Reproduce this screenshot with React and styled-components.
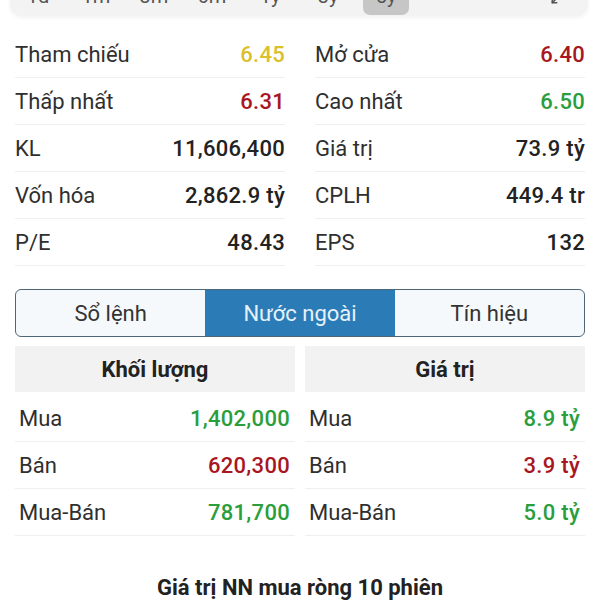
import React from "react";
import styled, { createGlobalStyle } from "styled-components";
import { Maximize2 } from "lucide-react";

const periods = ["1d", "1m", "3m", "6m", "1y", "3y", "5y"];

const stats = [
    { label: "Tham chiếu", value: "6.45", tone: "ref" },
    { label: "Mở cửa", value: "6.40", tone: "down" },
    { label: "Thấp nhất", value: "6.31", tone: "down" },
    { label: "Cao nhất", value: "6.50", tone: "up" },
    { label: "KL", value: "11,606,400" },
    { label: "Giá trị", value: "73.9 tỷ" },
    { label: "Vốn hóa", value: "2,862.9 tỷ" },
    { label: "CPLH", value: "449.4 tr" },
    { label: "P/E", value: "48.43" },
    { label: "EPS", value: "132" },
];

const tabs = ["Sổ lệnh", "Nước ngoài", "Tín hiệu"];

const foreign = [
    {
        title: "Khối lượng",
        rows: [
            { label: "Mua", value: "1,402,000", tone: "up" },
            { label: "Bán", value: "620,300", tone: "down" },
            { label: "Mua-Bán", value: "781,700", tone: "up" },
        ],
    },
    {
        title: "Giá trị",
        rows: [
            { label: "Mua", value: "8.9 tỷ", tone: "up" },
            { label: "Bán", value: "3.9 tỷ", tone: "down" },
            { label: "Mua-Bán", value: "5.0 tỷ", tone: "up" },
        ],
    },
];

const tones = {
    ref: "#dcbf2c",
    down: "#a8161f",
    up: "#2a9e3c",
};

export default function App() {
    return (
        <>
            <GlobalStyle />
            <Page>
                <PeriodBar>
                    {periods.map((p) => (
                        <PeriodItem key={p} $active={p === "5y"}>{p}</PeriodItem>
                    ))}
                    <PeriodIcon>
                        <Maximize2 size={18} strokeWidth={2} />
                    </PeriodIcon>
                </PeriodBar>

                <StatGrid>
                    {stats.map((s) => (
                        <StatRow key={s.label}>
                            <StatLabel>{s.label}</StatLabel>
                            <StatValue $tone={s.tone}>{s.value}</StatValue>
                        </StatRow>
                    ))}
                </StatGrid>

                <TabBar>
                    {tabs.map((t) => (
                        <TabButton key={t} $active={t === "Nước ngoài"}>{t}</TabButton>
                    ))}
                </TabBar>

                <ForeignGrid>
                    {foreign.map((col) => (
                        <ForeignCol key={col.title}>
                            <ForeignHead>{col.title}</ForeignHead>
                            {col.rows.map((r) => (
                                <ForeignRow key={r.label}>
                                    <StatLabel>{r.label}</StatLabel>
                                    <StatValue $tone={r.tone}>{r.value}</StatValue>
                                </ForeignRow>
                            ))}
                        </ForeignCol>
                    ))}
                </ForeignGrid>

                <SectionTitle>Giá trị NN mua ròng 10 phiên</SectionTitle>
            </Page>
        </>
    );
}

//====================================
//        THIS COMPONENT STYLES
//====================================
const GlobalStyle = createGlobalStyle`
    body {
        margin: 0;
        background: #ffffff;
        font-family: Roboto, "Noto Sans", sans-serif;
        color: #2a2a2a;
        overflow: hidden;
    }
`;
const Page = styled('div')`
    width: 600px;
    height: 600px;
    overflow: hidden;
`;
const PeriodBar = styled('div')`
    display: flex;
    align-items: center;
    height: 40px;
    margin: -24px 12px 0 10px;
    background: #f3f3f3;
    border-radius: 0 0 12px 12px;
    box-shadow: 0 2px 4px rgba(0, 0, 0, 0.05);
`;
const PeriodItem = styled('div')`
    width: 46px;
    height: 38px;
    margin: 0 6px;
    display: flex;
    align-items: center;
    justify-content: center;
    font-size: 20px;
    color: #555;
    border-radius: 7px;
    background: ${(props) => props.$active ? "#c6c6c6" : "transparent"};
    &:first-child { margin-left: 5px; }
`;
const PeriodIcon = styled('div')`
    margin-left: auto;
    margin-right: 20px;
    display: flex;
    color: #555;
`;
const StatGrid = styled('div')`
    display: grid;
    grid-template-columns: 1fr 1fr;
    column-gap: 30px;
    margin: 15px 15px 0;
`;
const StatRow = styled('div')`
    display: flex;
    align-items: center;
    justify-content: space-between;
    height: 46px;
    border-bottom: 1px solid #efefef;
`;
const StatLabel = styled('span')`
    font-size: 22px;
    color: #2f2f2f;
`;
const StatValue = styled('span')`
    font-size: 22px;
    font-weight: 500;
    letter-spacing: 0.3px;
    color: ${(props) => tones[props.$tone] || "#222"};
`;
const TabBar = styled('div')`
    display: grid;
    grid-template-columns: 1fr 1fr 1fr;
    height: 48px;
    margin: 23px 15px 0;
    border: 1.5px solid #4d6678;
    border-radius: 6px;
    overflow: hidden;
    box-sizing: border-box;
    background: #f6f9fb;
`;
const TabButton = styled('div')`
    display: flex;
    align-items: center;
    justify-content: center;
    font-size: 22px;
    color: ${(props) => props.$active ? "#e6f1fa" : "#333"};
    background: ${(props) => props.$active ? "#2b7cb6" : "transparent"};
`;
const ForeignGrid = styled('div')`
    display: grid;
    grid-template-columns: 1fr 1fr;
    column-gap: 10px;
    margin: 9px 15px 0;
`;
const ForeignCol = styled('div')`
    display: flex;
    flex-direction: column;
`;
const ForeignHead = styled('div')`
    height: 46px;
    margin-bottom: 3px;
    display: flex;
    align-items: center;
    justify-content: center;
    background: #f2f2f2;
    font-size: 22px;
    font-weight: 700;
    color: #222;
`;
const ForeignRow = styled(StatRow)`
    padding: 0 5px 0 4px;
`;
const SectionTitle = styled('div')`
    margin-top: 39px;
    text-align: center;
    font-size: 22px;
    font-weight: 700;
    color: #222;
`;
